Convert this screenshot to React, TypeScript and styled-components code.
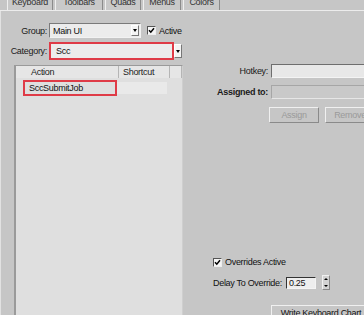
import React from "react";
import styled, { createGlobalStyle } from "styled-components";

const Global = createGlobalStyle`
  body {
    margin: 0;
    overflow: hidden;
  }
`;

const Window = styled.div`
  width: 364px;
  height: 315px;
  overflow: hidden;
  display: flex;
  flex-direction: column;
  background: #c6c6c6;
  font-family: "Liberation Sans", Arial, sans-serif;
  font-size: 9px;
  letter-spacing: -0.3px;
  color: #111;
`;

const TabStrip = styled.div`
  height: 10px;
  flex-shrink: 0;
  display: flex;
  align-items: flex-end;
  gap: 2px;
  padding-left: 7px;
  border-bottom: 1px solid #ececec;
`;

const Tab = styled.div<{ $w: number }>`
  width: ${(p) => p.$w}px;
  height: 18px;
  box-sizing: border-box;
  display: flex;
  align-items: flex-end;
  justify-content: center;
  padding-bottom: 3px;
  border-left: 1px solid #efefef;
  border-right: 1px solid #8a8a8a;
  background: #c9c9c9;
  color: #333;
`;

const Body = styled.div`
  flex: 1;
  display: flex;
  min-height: 0;
  padding-left: 13px;
  border-left: 1px solid #e2e2e2;
`;

const LeftCol = styled.div`
  width: 170px;
  display: flex;
  flex-direction: column;
  padding-top: 12px;
`;

const FormRow = styled.div<{ $h: number; $mt?: number }>`
  height: ${(p) => p.$h}px;
  margin-top: ${(p) => p.$mt ?? 0}px;
  display: flex;
  align-items: center;
`;

const Label = styled.span<{ $w: number; $bold?: boolean }>`
  width: ${(p) => p.$w}px;
  flex-shrink: 0;
  display: flex;
  justify-content: flex-end;
  font-weight: ${(p) => (p.$bold ? 700 : 400)};
  color: #1a1a1a;
  white-space: nowrap;
`;

const Combo = styled.div<{ $w: number }>`
  width: ${(p) => p.$w}px;
  height: 15px;
  margin-left: 2px;
  box-sizing: border-box;
  display: flex;
  align-items: center;
  background: #ececec;
  border: 1px solid;
  border-color: #7a7a7a #f2f2f2 #f2f2f2 #7a7a7a;
  padding-left: 3px;
`;

const ComboText = styled.span`
  flex: 1;
`;

const ArrowBtn = styled.div`
  width: 8px;
  height: 11px;
  margin-right: 1px;
  display: flex;
  align-items: center;
  justify-content: center;
  background: #f4f4f4;
  border: 1px solid;
  border-color: #fff #777 #777 #fff;
  box-sizing: border-box;
`;

const Triangle = styled.span`
  width: 0;
  height: 0;
  border-left: 2.5px solid transparent;
  border-right: 2.5px solid transparent;
  border-top: 3px solid #000;
`;

const RedField = styled.div`
  width: 125px;
  height: 18px;
  margin-left: 2px;
  box-sizing: border-box;
  display: flex;
  align-items: center;
  padding-left: 5px;
  background: #ececec;
  border: 2px solid #df3b47;
`;

const SideArrow = styled(ArrowBtn)`
  height: 14px;
  width: 8px;
  margin-left: 0;
`;

const Check = styled.span`
  width: 9px;
  height: 9px;
  flex-shrink: 0;
  box-sizing: border-box;
  display: flex;
  align-items: center;
  justify-content: center;
  background: #f5f5f5;
  border: 1px solid;
  border-color: #555 #eee #eee #555;
`;

const CheckLabel = styled.span`
  margin-left: 3px;
`;

const List = styled.div`
  flex: 1;
  margin-top: 5px;
  display: flex;
  flex-direction: column;
  background: #dfdfdf;
  border-left: 2px solid #9a9a9a;
  border-top: 1px solid #9a9a9a;
  border-right: 1px solid #cfcfcf;
`;

const HeaderRow = styled.div`
  height: 12px;
  display: flex;
  background: #e6e6e6;
`;

const HeaderCell = styled.div<{ $w?: number; $pl?: number }>`
  width: ${(p) => (p.$w ? `${p.$w}px` : "auto")};
  flex: ${(p) => (p.$w ? "none" : 1)};
  box-sizing: border-box;
  display: flex;
  align-items: center;
  padding-left: ${(p) => p.$pl ?? 4}px;
  border-right: 1px solid #b5b5b5;
  color: #222;
`;

const ItemRow = styled.div`
  height: 17px;
  display: flex;
  align-items: center;
  margin-top: 1px;
`;

const ItemCell = styled.div`
  width: 94px;
  height: 16px;
  margin-left: 7px;
  box-sizing: border-box;
  display: flex;
  align-items: center;
  padding-left: 4px;
  border: 2px solid #df3b47;
  color: #111;
`;

const ShortcutCell = styled.div`
  width: 50px;
  height: 12px;
  background: #e9e9e9;
`;

const RightCol = styled.div`
  flex: 1;
  display: flex;
  flex-direction: column;
  padding-top: 53px;
`;

const FieldRow = styled.div<{ $mt?: number }>`
  display: flex;
  align-items: center;
  margin-top: ${(p) => p.$mt ?? 0}px;
`;

const Input = styled.div<{ $disabled?: boolean }>`
  flex: 1;
  height: 14px;
  margin-left: 3px;
  box-sizing: border-box;
  background: ${(p) => (p.$disabled ? "#c9c9c9" : "#e8e8e8")};
  border: 1px solid;
  border-color: ${(p) =>
    p.$disabled ? "#a6a6a6 #e6e6e6 #e6e6e6 #a6a6a6" : "#6e6e6e #f4f4f4 #f4f4f4 #6e6e6e"};
`;

const ButtonRow = styled.div`
  display: flex;
  gap: 6px;
  margin-top: 8px;
  padding-left: 86px;
`;

const Button = styled.div<{ $w: number; $disabled?: boolean }>`
  width: ${(p) => p.$w}px;
  height: 16px;
  flex-shrink: 0;
  box-sizing: border-box;
  display: flex;
  align-items: center;
  justify-content: center;
  border: 1px solid;
  border-color: #f0f0f0 #8a8a8a #8a8a8a #f0f0f0;
  color: ${(p) => (p.$disabled ? "#9a9a9a" : "#111")};
  white-space: nowrap;
  overflow: hidden;
`;

const OptionRow = styled.div<{ $mt: number }>`
  display: flex;
  align-items: center;
  padding-left: 30px;
  margin-top: ${(p) => p.$mt}px;
`;

const SpinInput = styled.div`
  width: 30px;
  height: 12px;
  margin-left: 4px;
  box-sizing: border-box;
  display: flex;
  align-items: center;
  padding-left: 2px;
  background: #eeeeee;
  border: 1px solid;
  border-color: #333 #f4f4f4 #f4f4f4 #333;
`;

const Spinner = styled.div`
  width: 6px;
  height: 13px;
  margin-left: 6px;
  display: flex;
  flex-direction: column;
  align-items: center;
  justify-content: space-around;
  background: #d2d2d2;
  border: 1px solid;
  border-color: #f0f0f0 #888 #888 #f0f0f0;
`;

const Up = styled.span`
  width: 0;
  height: 0;
  border-left: 2px solid transparent;
  border-right: 2px solid transparent;
  border-bottom: 2px solid #000;
`;

const Down = styled(Up)`
  border-bottom: none;
  border-top: 2px solid #000;
`;

const WriteRow = styled.div`
  display: flex;
  padding-left: 88px;
  margin-top: 15px;
`;

const tabs = [
  { name: "Keyboard", w: 46 },
  { name: "Toolbars", w: 48 },
  { name: "Quads", w: 36 },
  { name: "Menus", w: 38 },
  { name: "Colors", w: 37 },
];

function CheckMark() {
  return (
    <svg width="7" height="7" viewBox="0 0 7 7">
      <path d="M1 3.2 L2.8 5.2 L6 1.2" stroke="#000" strokeWidth="1.5" fill="none" />
    </svg>
  );
}

export default function App() {
  return (
    <Window>
      <Global />
      <TabStrip>
        {tabs.map((t) => (
          <Tab key={t.name} $w={t.w}>
            {t.name}
          </Tab>
        ))}
      </TabStrip>
      <Body>
        <LeftCol>
          <FormRow $h={15}>
            <Label $w={33}>Group:</Label>
            <Combo $w={92}>
              <ComboText>Main UI</ComboText>
              <ArrowBtn>
                <Triangle />
              </ArrowBtn>
            </Combo>
            <Check style={{ marginLeft: 6 }}>
              <CheckMark />
            </Check>
            <CheckLabel>Active</CheckLabel>
          </FormRow>
          <FormRow $h={18} $mt={4}>
            <Label $w={33}>Category:</Label>
            <RedField>Scc</RedField>
            <SideArrow>
              <Triangle />
            </SideArrow>
          </FormRow>
          <List>
            <HeaderRow>
              <HeaderCell $w={103} $pl={15}>
                Action
              </HeaderCell>
              <HeaderCell $w={51}>Shortcut</HeaderCell>
              <HeaderCell />
            </HeaderRow>
            <ItemRow>
              <ItemCell>SccSubmitJob</ItemCell>
              <ShortcutCell />
            </ItemRow>
          </List>
        </LeftCol>
        <RightCol>
          <FieldRow>
            <Label $w={85}>Hotkey:</Label>
            <Input />
          </FieldRow>
          <FieldRow $mt={7}>
            <Label $w={85} $bold>
              Assigned to:
            </Label>
            <Input $disabled />
          </FieldRow>
          <ButtonRow>
            <Button $w={50} $disabled>
              Assign
            </Button>
            <Button $w={50} $disabled>
              Remove
            </Button>
          </ButtonRow>
          <OptionRow $mt={134}>
            <Check>
              <CheckMark />
            </Check>
            <CheckLabel>Overrides Active</CheckLabel>
          </OptionRow>
          <OptionRow $mt={8}>
            <span>Delay To Override:</span>
            <SpinInput>0.25</SpinInput>
            <Spinner>
              <Up />
              <Down />
            </Spinner>
          </OptionRow>
          <WriteRow>
            <Button $w={100}>Write Keyboard Chart</Button>
          </WriteRow>
        </RightCol>
      </Body>
    </Window>
  );
}
